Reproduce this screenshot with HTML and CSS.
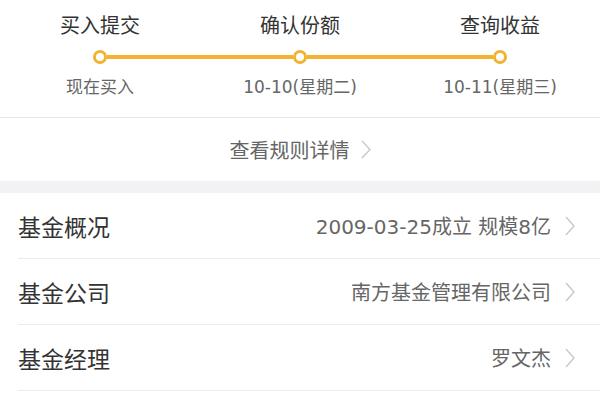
FILE: index.html
```html
<!DOCTYPE html>
<html lang="zh-CN">
<head>
    <meta charset="UTF-8">
    <meta name="viewport" content="width=device-width, initial-scale=1.0">
    <title>基金详情</title>
    <link rel="stylesheet" href="styles.css">
</head>
<body>

<!-- Buy process steps -->
<div class="steps">
    <div class="step first">
        <div class="step-title">买入提交</div>
        <div class="step-track">
            <span class="track-line"></span>
            <span class="dot"></span>
            <span class="track-line"></span>
        </div>
        <div class="step-date">现在买入</div>
    </div>
    <div class="step">
        <div class="step-title">确认份额</div>
        <div class="step-track">
            <span class="track-line"></span>
            <span class="dot"></span>
            <span class="track-line"></span>
        </div>
        <div class="step-date">10-10(星期二)</div>
    </div>
    <div class="step last">
        <div class="step-title">查询收益</div>
        <div class="step-track">
            <span class="track-line"></span>
            <span class="dot"></span>
            <span class="track-line"></span>
        </div>
        <div class="step-date">10-11(星期三)</div>
    </div>
</div>

<div class="rules">
    查看规则详情
    <svg class="chevron" width="10" height="19" viewBox="0 0 10 19"><polyline points="1,1 9,9.5 1,18" fill="none" stroke="#c8c8c8" stroke-width="1.4"/></svg>
</div>

<div class="gap"></div>

<!-- Fund info list -->
<div class="info-list">
    <div class="info-row">
        <span class="info-label">基金概况</span>
        <span class="info-value">2009-03-25成立 规模8亿</span>
        <svg class="chevron" width="10" height="20" viewBox="0 0 10 20"><polyline points="1,1 9,10 1,19" fill="none" stroke="#c8c8c8" stroke-width="1.4"/></svg>
    </div>
    <div class="info-row">
        <span class="info-label">基金公司</span>
        <span class="info-value">南方基金管理有限公司</span>
        <svg class="chevron" width="10" height="20" viewBox="0 0 10 20"><polyline points="1,1 9,10 1,19" fill="none" stroke="#c8c8c8" stroke-width="1.4"/></svg>
    </div>
    <div class="info-row">
        <span class="info-label">基金经理</span>
        <span class="info-value">罗文杰</span>
        <svg class="chevron" width="10" height="20" viewBox="0 0 10 20"><polyline points="1,1 9,10 1,19" fill="none" stroke="#c8c8c8" stroke-width="1.4"/></svg>
    </div>
</div>

</body>
</html>
```

FILE: styles.css
```css
/* General Styles */
body {
    margin: 0;
    background-color: #ffffff;
    font-family: "Noto Sans CJK SC", "Noto Sans", sans-serif;
    color: #333;
}

/* Steps */
.steps {
    display: flex;
    padding: 13px 0 20px;
    border-bottom: 1px solid #e8e8e8;
}

.step {
    flex: 1;
    display: flex;
    flex-direction: column;
    align-items: center;
}

.step-title {
    font-size: 20px;
    line-height: 24px;
    color: #333;
}

.step-track {
    display: flex;
    align-items: center;
    width: 100%;
    height: 14px;
    margin-top: 13px;
}

.track-line {
    flex: 1;
    height: 4px;
    background-color: #f3b22f;
}

.step.first .track-line:first-child,
.step.last .track-line:last-child {
    background-color: transparent;
}

.dot {
    width: 8px;
    height: 8px;
    border: 3px solid #f3b22f;
    border-radius: 50%;
    background-color: #ffffff;
}

.step-date {
    margin-top: 13px;
    font-family: "DejaVu Sans", "Noto Sans CJK SC", sans-serif;
    font-size: 17px;
    line-height: 20px;
    color: #666;
}

/* Rules link */
.rules {
    height: 63px;
    display: flex;
    justify-content: center;
    align-items: center;
    font-size: 20px;
    color: #666;
}

.rules .chevron {
    margin-left: 11px;
}

.gap {
    height: 12px;
    background-color: #f2f2f5;
}

/* Info list */
.info-row {
    display: flex;
    align-items: center;
    height: 65px;
    margin-left: 18px;
    padding-right: 25px;
    border-bottom: 1px solid #ececec;
}

.info-label {
    flex: 1;
    font-size: 23px;
    color: #333;
}

.info-value {
    font-family: "DejaVu Sans", "Noto Sans CJK SC", sans-serif;
    font-size: 20px;
    color: #666;
}

.info-row .chevron {
    margin-left: 14px;
}
```
